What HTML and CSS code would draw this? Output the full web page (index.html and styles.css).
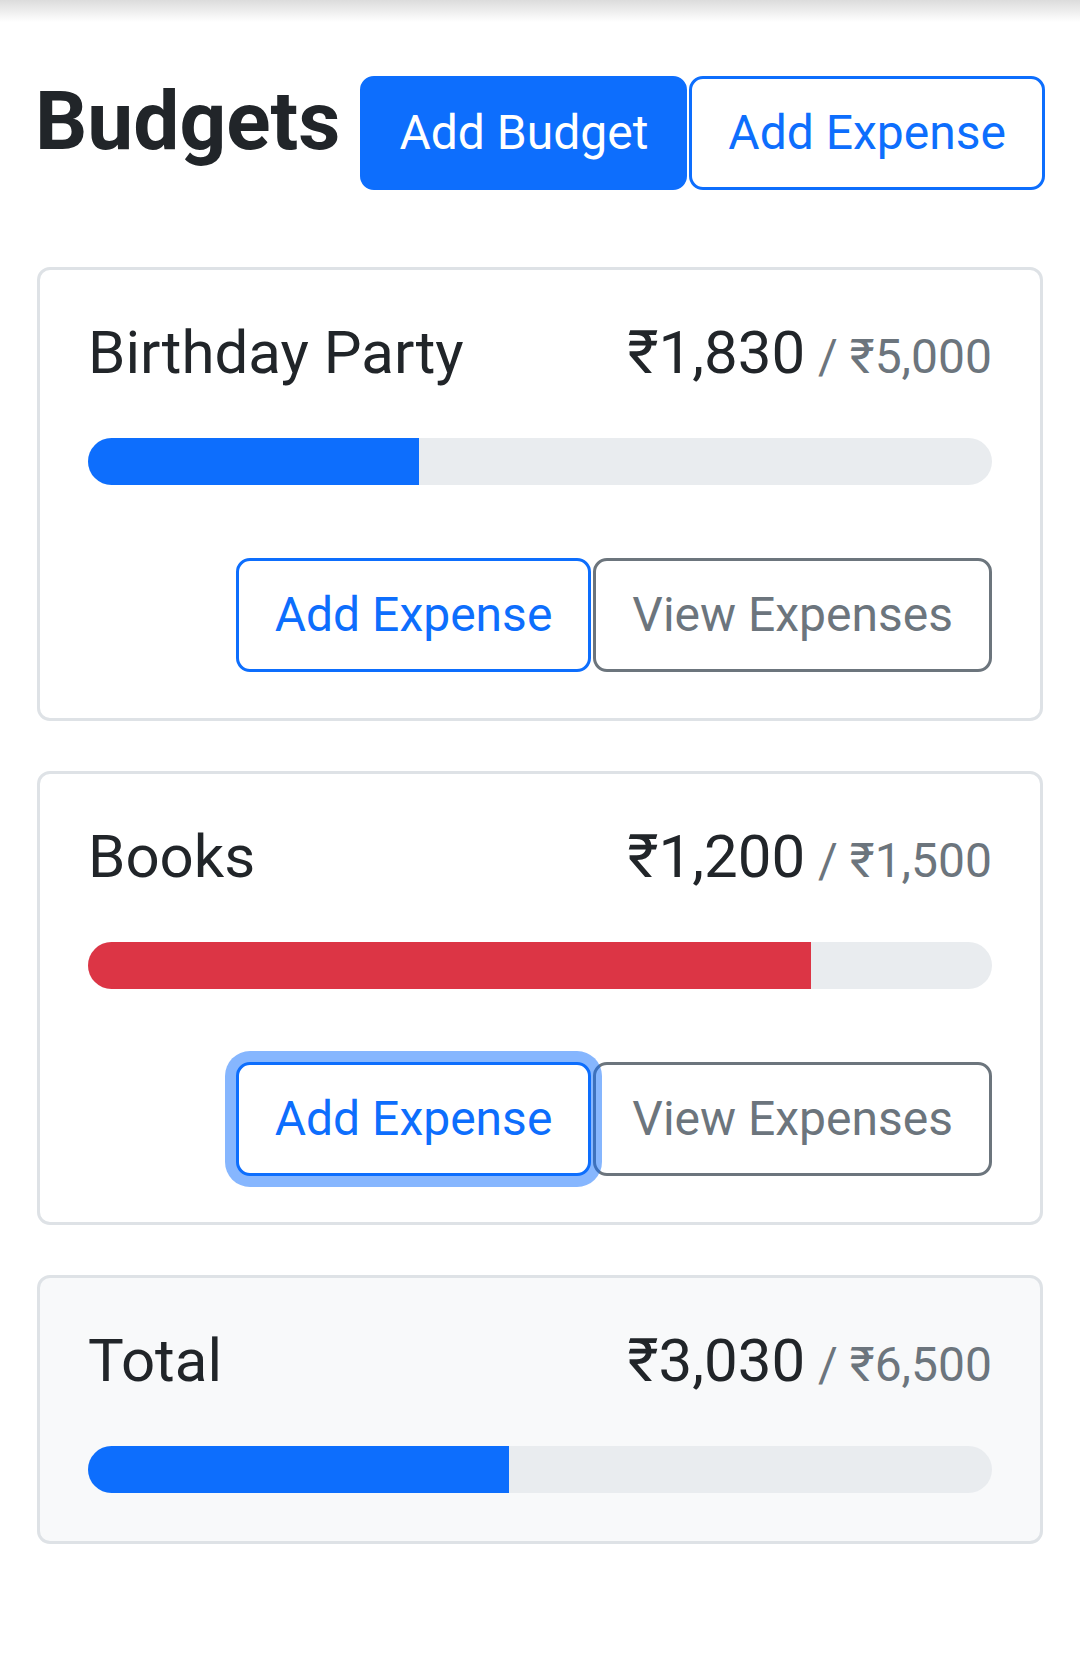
FILE: index.html
```html
<!DOCTYPE html>
<html lang="en">
<head>
<meta charset="utf-8">
<title>Budgets</title>
<link rel="stylesheet" href="styles.css">
</head>
<body>
<div class="topshade"></div>
<main class="page">
  <header class="header">
    <h1 class="title">Budgets</h1>
    <div class="btn-row">
      <button class="btn btn-primary">Add Budget</button>
      <button class="btn btn-outline-primary">Add Expense</button>
    </div>
  </header>

  <section class="cards">
    <div class="card">
      <div class="card-head">
        <div class="card-name">Birthday Party</div>
        <div class="amount">₹1,830<span class="max">/ ₹5,000</span></div>
      </div>
      <div class="progress"><div class="bar bar-blue" style="width: 36.6%"></div></div>
      <div class="card-actions">
        <button class="btn btn-outline-primary">Add Expense</button>
        <button class="btn btn-outline-secondary">View Expenses</button>
      </div>
    </div>

    <div class="card">
      <div class="card-head">
        <div class="card-name">Books</div>
        <div class="amount">₹1,200<span class="max">/ ₹1,500</span></div>
      </div>
      <div class="progress"><div class="bar bar-red" style="width: 80%"></div></div>
      <div class="card-actions">
        <button class="btn btn-outline-primary focused">Add Expense</button>
        <button class="btn btn-outline-secondary">View Expenses</button>
      </div>
    </div>

    <div class="card card-light">
      <div class="card-head">
        <div class="card-name">Total</div>
        <div class="amount">₹3,030<span class="max">/ ₹6,500</span></div>
      </div>
      <div class="progress"><div class="bar bar-blue" style="width: 46.6%"></div></div>
    </div>
  </section>
</main>
</body>
</html>
```
FILE: styles.css
```css
* { box-sizing: border-box; }

html, body {
  margin: 0;
  padding: 0;
  background: #ffffff;
  font-family: Roboto, "Noto Sans", "DejaVu Sans", sans-serif;
  color: #212529;
}

.topshade {
  height: 22px;
  background: linear-gradient(to bottom, #dcdcdc, #ffffff);
}

.page {
  padding: 0 37px 0 37px;
}

.header {
  display: flex;
  align-items: baseline;
  gap: 20px;
  margin-top: 50px;
}

.title {
  margin: 0;
  margin-left: -2px;
  font-size: 82px;
  font-weight: 700;
  line-height: 1.2;
  color: #212529;
}

.btn-row,
.card-actions {
  display: flex;
  gap: 2px;
}

.btn {
  height: 114px;
  padding: 0 36px;
  font-family: Roboto, "Noto Sans", sans-serif;
  font-size: 48px;
  font-weight: 400;
  line-height: 1;
  border: 3px solid transparent;
  border-radius: 14px;
  background: #ffffff;
  cursor: pointer;
  white-space: nowrap;
}

.btn-primary {
  background: #0d6efd;
  border-color: #0d6efd;
  color: #ffffff;
}

.btn-outline-primary {
  color: #0d6efd;
  border-color: #0d6efd;
}

.btn-outline-secondary {
  color: #6c757d;
  border-color: #6c757d;
}

.focused {
  position: relative;
  z-index: 1;
  box-shadow: 0 0 0 11px rgba(13, 110, 253, 0.5);
}

.cards {
  display: flex;
  flex-direction: column;
  gap: 50px;
  margin-top: 77px;
}

.card {
  border: 3px solid #dee2e6;
  border-radius: 13px;
  padding: 47px 48px 46px 48px;
  background: #ffffff;
}

.card-light {
  background: #f8f9fa;
  padding-bottom: 48px;
}

.card-head {
  display: flex;
  justify-content: space-between;
  align-items: baseline;
  line-height: 1.2;
}

.card-name {
  font-size: 60px;
  color: #212529;
}

.amount {
  font-size: 60px;
  color: #212529;
}

.max {
  font-size: 48px;
  color: #6c757d;
  margin-left: 13px;
}

.progress {
  height: 47px;
  margin-top: 49px;
  background: #e9ecef;
  border-radius: 24px;
  overflow: hidden;
  display: flex;
}

.bar {
  height: 100%;
}

.bar-blue { background: #0d6efd; }
.bar-red { background: #dc3545; }

.card-actions {
  justify-content: flex-end;
  margin-top: 73px;
}
```
